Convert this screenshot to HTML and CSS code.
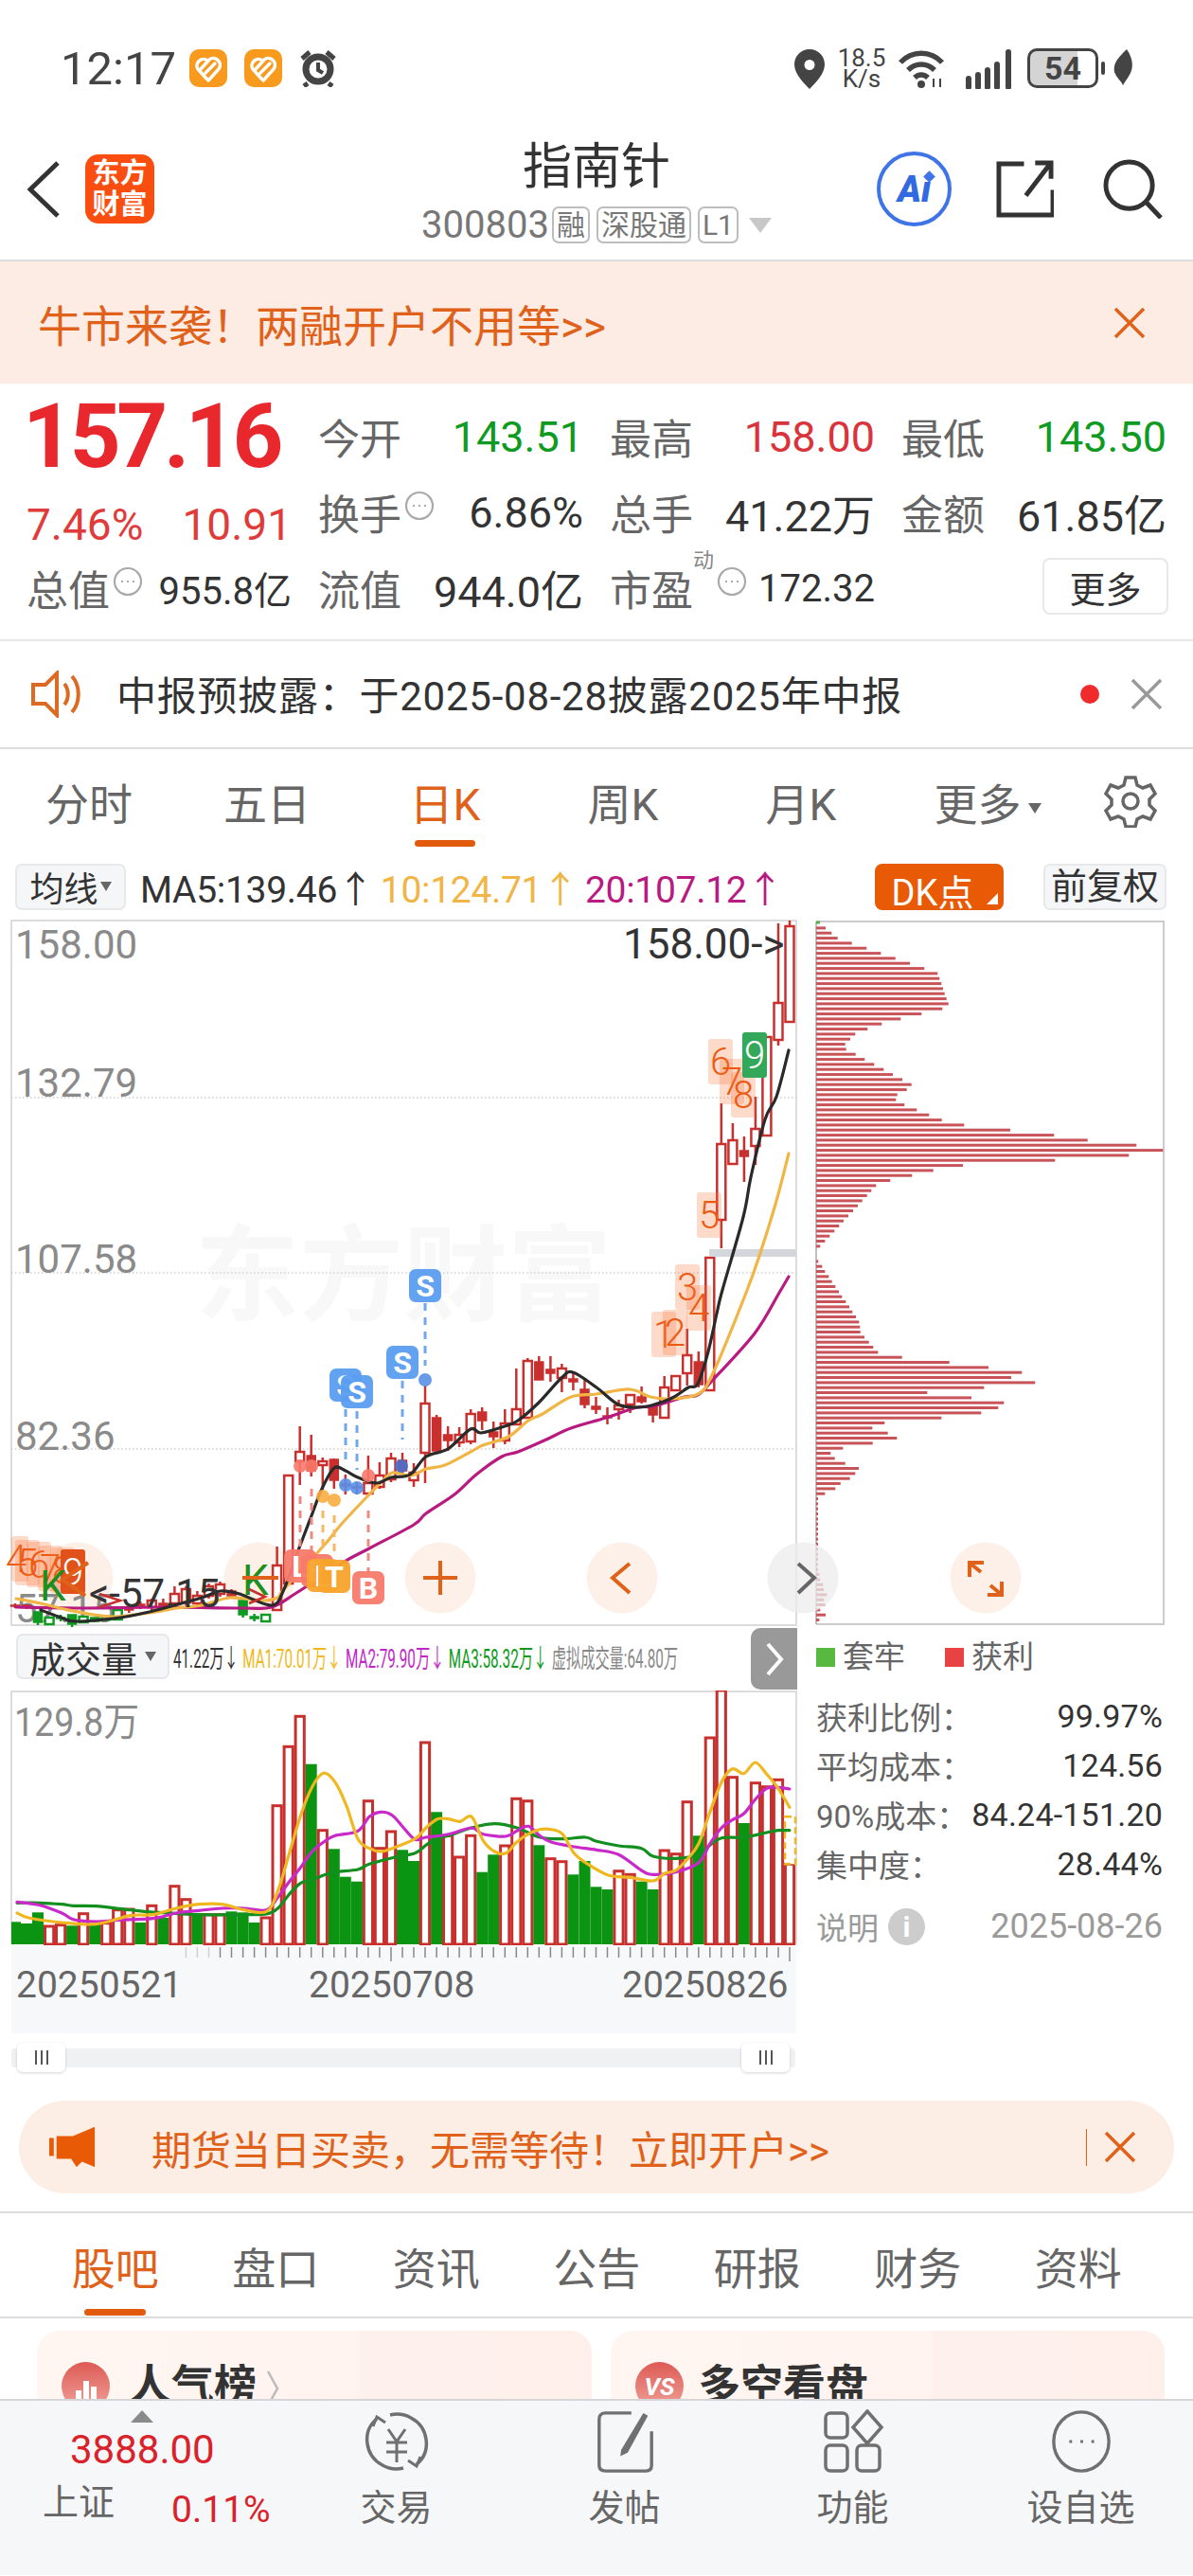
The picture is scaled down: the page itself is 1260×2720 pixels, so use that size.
FILE: index.html
```html
<!DOCTYPE html>
<html lang="zh-CN">
<head>
<meta charset="utf-8">
<title>指南针</title>
<link rel="stylesheet" href="styles.css">
</head>
<body>
<div class="page">

  <header class="status">
    <div class="status-left">
      <span class="clock">12:17</span>
      <svg class="tile" viewBox="0 0 40 40"><rect class="tile-bg" width="40" height="40" rx="10"/><path class="tile-mark" d="M18 31L9 21C5 15 13 7 19 12M20 33l11-12C36 14 27 6 21 11L12 21M17 25l10-10"/></svg>
      <svg class="tile" viewBox="0 0 40 40"><rect class="tile-bg" width="40" height="40" rx="10"/><path class="tile-mark" d="M18 31L9 21C5 15 13 7 19 12M20 33l11-12C36 14 27 6 21 11L12 21M17 25l10-10"/></svg>
      <svg class="tile" viewBox="0 0 40 40"><circle class="alarm-ring" cx="20" cy="21" r="13"/><path class="alarm-hand" d="M20 14v8l5 3"/><path class="alarm-ear" d="M3 10l8-7M37 10l-8-7M9 36l-4 3M31 36l4 3"/></svg>
    </div>
    <div class="status-right">
      <svg class="pin" viewBox="0 0 32 42"><path class="dark-fill" fill-rule="evenodd" d="M16 0c9 0 16 7 16 16 0 10-10 20-16 26C10 36 0 26 0 16 0 7 7 0 16 0zm0 11a5.500 5.500 0 1 0 0 11 5.500 5.500 0 0 0 0-11z"/></svg>
      <div class="speed"><span>18.5</span><span>K/s</span></div>
      <svg class="wifi" viewBox="0 0 50 42"><path class="wifi-arc" d="M3 14c12-13 32-13 44 0M11 22c8-8 20-8 28 0M18 30c4-4 10-4 14 0"/><circle class="dark-fill" cx="25" cy="37" r="4"/><path class="wifi-tick" d="M38 31v9M45 31v9"/></svg>
      <svg class="signal" viewBox="0 0 50 42"><path class="signal-bar" d="M3 31v9M13 27v13M23 22v18M33 16v24M45 3v37"/></svg>
      <div class="battery"><span class="battery-level">54</span></div>
      <svg class="leaf" viewBox="0 0 22 40"><path class="dark-fill" d="M15 0c6 9 8 18 3 27-2 4-5 7-7 11C9 33 4 30 2 24 0 14 8 7 15 0z"/></svg>
    </div>
  </header>

  <nav class="nav">
    <div class="nav-left">
      <svg class="back" viewBox="0 0 34 60"><polyline points="32,2 3,30 32,58"/></svg>
      <div class="logo">东方<br>财富</div>
    </div>
    <div class="nav-title">
      <div class="stock-name">指南针</div>
      <div class="stock-sub">
        <span class="stock-code">300803</span>
        <span class="tag">融</span>
        <span class="tag">深股通</span>
        <span class="tag">L1</span>
        <i class="tri-down"></i>
      </div>
    </div>
    <div class="nav-right">
      <div class="ai-badge"><span>Ai</span><i class="ai-spark"></i></div>
      <svg class="share" viewBox="0 0 62 62"><path d="M30 4H3v55h58V32M32 38L58 4M42 3h17v17"/></svg>
      <svg class="search" viewBox="0 0 64 64"><circle cx="28" cy="28" r="25"/><path d="M46 46l16 17"/></svg>
    </div>
  </nav>

  <section class="promo">
    <span>牛市来袭！两融开户不用等&gt;&gt;</span>
    <svg class="close-x orange" viewBox="0 0 34 34"><path d="M2 2l30 30M32 2L2 32"/></svg>
  </section>

  <section class="quote">
    <div class="quote-price">157.16</div>
    <div class="cell"><span class="lbl">今开</span><span class="val down">143.51</span></div>
    <div class="cell"><span class="lbl">最高</span><span class="val up">158.00</span></div>
    <div class="cell"><span class="lbl">最低</span><span class="val down">143.50</span></div>

    <div class="quote-change"><span>7.46%</span><span>10.91</span></div>
    <div class="cell"><span class="lbl">换手<svg class="hint" viewBox="0 0 32 32"><circle cx="16" cy="16" r="14"/><path d="M9 16h2M15 16h2M21 16h2"/></svg></span><span class="val">6.86%</span></div>
    <div class="cell"><span class="lbl">总手</span><span class="val">41.22万</span></div>
    <div class="cell"><span class="lbl">金额</span><span class="val">61.85亿</span></div>

    <div class="cell"><span class="lbl">总值<svg class="hint" viewBox="0 0 32 32"><circle cx="16" cy="16" r="14"/><path d="M9 16h2M15 16h2M21 16h2"/></svg></span><span class="val small">955.8亿</span></div>
    <div class="cell"><span class="lbl">流值</span><span class="val">944.0亿</span></div>
    <div class="cell"><span class="lbl">市盈<sup class="sup">动</sup><svg class="hint" viewBox="0 0 32 32"><circle cx="16" cy="16" r="14"/><path d="M9 16h2M15 16h2M21 16h2"/></svg></span><span class="val small">172.32</span></div>
    <div class="cell end"><button class="more-btn">更多</button></div>
  </section>

  <section class="notice">
    <svg class="notice-icon" viewBox="0 0 56 50"><path d="M16 15H3v20h13l12 12V3zM36 14c5 6 5 16 0 22M44 6c9 10 9 28 0 38"/></svg>
    <span class="notice-text">中报预披露：于2025-08-28披露2025年中报</span>
    <i class="notice-dot"></i>
    <svg class="close-x grey" viewBox="0 0 34 34"><path d="M2 2l30 30M32 2L2 32"/></svg>
  </section>

  <div class="periods">
    <span class="period">分时</span>
    <span class="period">五日</span>
    <span class="period active">日K</span>
    <span class="period">周K</span>
    <span class="period">月K</span>
    <span class="period shifted">更多<i class="tri-mini"></i></span>
    <svg class="gear" viewBox="0 0 56 56"><path d="M23 3h10l2 8 6 3 8-3 5 9-6 6v6l6 6-5 9-8-3-6 3-2 8H23l-2-8-6-3-8 3-5-9 6-6v-6l-6-6 5-9 8 3 6-3z"/><circle cx="28" cy="28" r="8"/></svg>
  </div>

  <div class="kbar">
    <button class="pick">均线<i class="tri-mini"></i></button>
    <span class="ma ma5">MA5:139.46↑</span>
    <span class="ma ma10">10:124.71↑</span>
    <span class="ma ma20">20:107.12↑</span>
    <span class="kbar-gap"></span>
    <button class="dk">DK点<i class="dk-corner"></i></button>
    <button class="adjust">前复权</button>
  </div>

  <div class="chart-row">
    <svg class="kline" viewBox="0 968 856 750">
      <rect class="frame" x="12" y="972" width="829" height="744"/>
      <text class="watermark" x="206" y="1386">东方财富</text>
      <path class="grid-line" d="M12 1159H841M12 1344H841M12 1530H841"/>
      <circle class="round-key" cx="82" cy="1666" r="37.500"/>
      <circle class="round-key" cx="274" cy="1666" r="37.500"/>
      <circle class="round-key" cx="465" cy="1666" r="37.500"/>
      <circle class="round-key" cx="657" cy="1666" r="37.500"/>
      <circle class="round-key grey-key" cx="848" cy="1666" r="37.500"/>
      <text class="axis-label" x="16" y="1012">158.00</text>
      <text class="axis-label" x="16" y="1158">132.79</text>
      <text class="axis-label" x="16" y="1344">107.58</text>
      <text class="axis-label" x="16" y="1531">82.36</text>
      <text class="axis-label" x="16" y="1713">57.15</text>
      <g id="candles"></g>
      <rect class="limit-band" x="749" y="1319" width="92" height="8"/>
      <g id="ma-lines"></g>
      <text class="peak-label" x="658" y="1012">158.00-&gt;</text>
      <g id="marks"></g>
      <text class="low-label" x="94" y="1697">&lt;-57.15</text>
      <text class="k-letter" x="42" y="1690">K</text>
      <text class="k-letter" x="256" y="1684">K</text>
      <path class="key-stroke" d="M256 1666H294M447 1666H483M465 1648V1684M665 1651L647 1666L665 1682M93 1650L66 1668L90 1685"/>
      <path class="key-stroke grey-stroke" d="M843 1651L860 1666L843 1682"/>
      <path class="low-chevron" d="M105 1683L127 1690L105 1697M263 1678L280 1686L263 1693"/>
    </svg>
    <svg class="profile" viewBox="856 968 404 750">
      <path class="profile-frame" d="M862 973H1229V1715H862"/>
      <path class="profile-axis" d="M862 973V1715"/>
      <g id="profile-bars"></g>
      <circle class="round-key" cx="1041" cy="1666" r="37.500"/>
      <path class="expand" d="M1024 1665V1650H1039M1025 1651L1036 1660M1058 1670V1684H1043M1057 1683L1046 1674"/>
    </svg>
  </div>

  <div class="lower">
    <div class="lower-left">
      <div class="vol-head">
        <button class="pick wide">成交量<i class="tri-mini"></i></button>
        <div class="vol-legend">
          <div class="vol-legend-line">
            <span>41.22万↓</span>
            <span class="c-ma1">MA1:70.01万↓</span>
            <span class="c-ma2">MA2:79.90万↓</span>
            <span class="c-ma3">MA3:58.32万↓</span>
            <span class="c-virtual">虚拟成交量:64.80万</span>
          </div>
        </div>
        <button class="vol-next"><svg viewBox="0 0 20 36"><polyline points="3,2 17,18 3,34"/></svg></button>
      </div>
      <svg class="volume" viewBox="0 1785 856 269">
        <path class="vol-frame" d="M12 2053V1786H841V2053"/>
        <text class="axis-label" x="15" y="1833" textLength="132" lengthAdjust="spacingAndGlyphs">129.8万</text>
        <g id="vol-bars"></g>
        <g id="vol-lines"></g>
      </svg>
      <div class="time-axis">
        <svg id="ticks" class="ticks" viewBox="0 0 829 18"></svg>
        <div class="dates">
          <span>20250521</span>
          <span>20250708</span>
          <span>20250826</span>
        </div>
      </div>
      <div class="slider">
        <span class="grip"><i></i><i></i><i></i></span>
        <span class="grip"><i></i><i></i><i></i></span>
      </div>
    </div>
    <aside class="stats">
      <div class="stats-legend">
        <span><i class="sq sq-green"></i>套牢</span>
        <span><i class="sq sq-red"></i>获利</span>
      </div>
      <dl class="stats-list">
        <div><dt>获利比例：</dt><dd>99.97%</dd></div>
        <div><dt>平均成本：</dt><dd>124.56</dd></div>
        <div><dt>90%成本：</dt><dd>84.24-151.20</dd></div>
        <div><dt>集中度：</dt><dd>28.44%</dd></div>
      </dl>
      <div class="stats-foot">
        <span class="explain">说明<i class="info">i</i></span>
        <span class="stats-date">2025-08-26</span>
      </div>
    </aside>
  </div>

  <section class="pill">
    <svg class="horn" viewBox="0 0 52 44"><path d="M50 0v44l-14-6-6 6-6-9H8V10h18zM0 12h5v20H0z"/></svg>
    <span class="pill-text">期货当日买卖，无需等待！立即开户&gt;&gt;</span>
    <i class="pill-rule"></i>
    <svg class="close-x orange" viewBox="0 0 34 34"><path d="M2 2l30 30M32 2L2 32"/></svg>
  </section>

  <div class="subtabs">
    <span class="subtab active">股吧</span>
    <span class="subtab">盘口</span>
    <span class="subtab">资讯</span>
    <span class="subtab">公告</span>
    <span class="subtab">研报</span>
    <span class="subtab">财务</span>
    <span class="subtab">资料</span>
  </div>

  <div class="cards">
    <article class="card">
      <i class="card-ghost"></i>
      <i class="card-icon"><svg viewBox="0 0 40 40"><path d="M9 38V24h6v14zM17 38V14h6v24zM25 38V20h6v18z"/></svg></i>
      <b class="card-title">人气榜</b>
      <svg class="card-arrow" viewBox="0 0 14 40"><polyline points="2,2 12,20 2,38"/></svg>
    </article>
    <article class="card">
      <i class="card-ghost"></i>
      <i class="card-icon vs">VS</i>
      <b class="card-title">多空看盘</b>
    </article>
  </div>

  <footer class="dock">
    <div class="index">
      <i class="tri-up"></i>
      <div class="index-val">3888.00</div>
      <div class="index-row"><span>上证</span><span class="index-pct">0.11%</span></div>
    </div>
    <div class="dock-item">
      <svg viewBox="0 0 70 66"><path d="M14 9C-2 22 1 48 20 58c7 4 14 5 22 3M56 57C72 44 69 18 50 8c-7-4-14-5-22-3"/><path d="M10 17l4-10 9 6M60 49l-4 10-9-6" class="fine"/><path class="fine" d="M26 20l9 13 9-13M24 34h22M24 44h22M35 33v22"/></svg>
      <span>交易</span>
    </div>
    <div class="dock-item">
      <svg viewBox="0 0 62 70"><path d="M38 4H10Q3 4 3 11v50q0 6 7 6h44q6 0 6-6V24"/><path class="solid" d="M27 44l24-40 5 3-22 40-8 4z"/></svg>
      <span>发帖</span>
    </div>
    <div class="dock-item">
      <svg viewBox="0 0 64 68"><rect x="3" y="4" width="23" height="26" rx="5"/><path d="M47 2l15 17-15 17-15-17z"/><rect x="3" y="38" width="23" height="27" rx="5"/><rect x="36" y="38" width="24" height="27" rx="5"/></svg>
      <span>功能</span>
    </div>
    <div class="dock-item">
      <svg viewBox="0 0 66 70"><ellipse cx="33" cy="35" rx="30" ry="32"/><path class="fine" d="M20 35h3M32 35h3M44 35h3"/></svg>
      <span>设自选</span>
    </div>
  </footer>
</div>
<script src="script.js"></script>
</body>
</html>
```
FILE: styles.css
```css
* { box-sizing: border-box; }
html, body { margin: 0; padding: 0; background: #fff; }
body { font-family: Roboto, "Noto Sans CJK SC", sans-serif; color: #333; }
button { font-family: inherit; padding: 0; cursor: pointer; }
i { font-style: normal; }

.page { width: 1260px; height: 2720px; overflow: hidden; display: flex; flex-direction: column; background: #fff; }

/* system status strip */
.status { height: 125px; flex: none; display: flex; justify-content: space-between; padding: 50px 63px 0 64px; }
.status-left, .status-right { display: flex; align-items: flex-start; }
.clock { font-size: 49px; line-height: 46px; color: #444; width: 136px; }
.tile { width: 40px; height: 40px; margin-right: 18px; margin-top: 2px; }
.tile-bg { fill: #f79a1e; }
.tile-mark { fill: none; stroke: #fff; stroke-width: 3.500; stroke-linecap: round; }
.alarm-ring { fill: none; stroke: #444; stroke-width: 7; }
.alarm-hand { fill: none; stroke: #444; stroke-width: 4; }
.alarm-ear { fill: none; stroke: #444; stroke-width: 5; }
.dark-fill { fill: #444; }
.pin { width: 32px; height: 42px; margin: 2px 9px 0 0; }
.speed { width: 60px; display: flex; flex-direction: column; font-size: 26px; line-height: 22px; color: #444; text-align: center; margin-right: 8px; }
.wifi { width: 50px; height: 42px; margin: 2px 22px 0 0; }
.wifi-arc { fill: none; stroke: #444; stroke-width: 5.500; }
.wifi-tick { fill: none; stroke: #444; stroke-width: 2; }
.signal { width: 50px; height: 42px; margin: 2px 15px 0 0; }
.signal-bar { fill: none; stroke: #444; stroke-width: 6; stroke-linecap: round; }
.battery { position: relative; width: 75px; height: 42px; margin-top: 1px; border: 3px solid #444; border-radius: 10px; background: linear-gradient(90deg, #d4d4d4 72%, #fff 72%); display: flex; align-items: center; justify-content: center; }
.battery::after { content: ""; position: absolute; right: -10px; top: 11px; width: 4px; height: 14px; background: #444; border-radius: 2px; }
.battery-level { font-size: 34px; font-weight: 700; color: #444; line-height: 36px; }
.leaf { width: 22px; height: 40px; margin: 2px 0 0 15px; }

/* stock header */
.nav { height: 151px; flex: none; display: grid; grid-template-columns: 1fr auto 1fr; align-items: center; border-bottom: 2px solid #ddd; }
.nav-left { display: flex; align-items: center; padding-left: 29px; }
.back { width: 34px; height: 60px; fill: none; stroke: #333; stroke-width: 5; margin-right: 27px; }
.logo { width: 73px; height: 73px; background: #f94e0f; border-radius: 14px; color: #fff; font-size: 29px; font-weight: 700; line-height: 33px; text-align: center; padding-top: 4px; }
.nav-title { display: flex; flex-direction: column; align-items: center; margin-top: 4px; }
.stock-name { font-size: 52px; line-height: 62px; color: #333; }
.stock-sub { display: flex; align-items: center; gap: 7px; margin-top: 10px; color: #777; }
.stock-code { font-size: 40px; line-height: 40px; margin-right: -4px; }
.tag { height: 39px; border: 2px solid #bdbdbd; border-radius: 7px; font-size: 30px; line-height: 35px; padding: 0 3px; color: #777; }
.tri-down { width: 0; height: 0; border-left: 12px solid transparent; border-right: 12px solid transparent; border-top: 16px solid #c8c8c8; margin-left: 4px; }
.nav-right { display: flex; align-items: center; justify-content: flex-end; padding-right: 32px; }
.ai-badge { position: relative; width: 79px; height: 79px; border: 4px solid #3f74e6; border-radius: 50%; color: #3169e0; font-size: 38px; font-weight: 900; font-style: italic; display: flex; align-items: center; justify-content: center; margin-right: 47px; }
.ai-spark { position: absolute; right: 15px; top: 18px; width: 9px; height: 9px; background: #3f74e6; transform: rotate(45deg); }
.share { width: 61px; height: 61px; fill: none; stroke: #333; stroke-width: 5; margin-right: 52px; }
.search { width: 63px; height: 63px; fill: none; stroke: #333; stroke-width: 5; }

/* promo strip */
.promo { height: 129px; flex: none; background: #fdece4; display: flex; align-items: center; justify-content: space-between; padding: 0 50px 0 40px; color: #e0611a; font-size: 46px; }
.close-x { width: 34px; height: 34px; fill: none; stroke-width: 3.500; }
.close-x.orange { stroke: #e0611a; }
.close-x.grey { stroke: #999; }

/* quote table */
.quote { height: 272px; flex: none; padding: 16px 0 0 28px; display: grid; grid-template-columns: 280px 280px 280px 280px; grid-template-rows: 80px 80px 80px; column-gap: 28px; border-bottom: 2px solid #e8e8e8; }
.quote-price { font-size: 94px; font-weight: 700; color: #e9282d; letter-spacing: -4.300px; line-height: 80px; margin-left: -4px; }
.quote-change { display: flex; justify-content: space-between; color: #e03b3b; font-size: 46px; line-height: 50px; padding: 28px 0 0 0; }
.cell { display: flex; align-items: center; justify-content: space-between; }
.cell.end { justify-content: flex-end; padding-left: 0; }
.lbl { display: flex; align-items: center; font-size: 44px; color: #666; position: relative; }
.hint { width: 32px; height: 32px; margin: -14px 0 0 3px; fill: none; stroke: #aaa; stroke-width: 2.200; }
.val { font-size: 45px; color: #333; }
.val.small { font-size: 40px; }
.val.up { color: #d9343b; }
.val.down { color: #0f9a22; }
.sup { font-size: 22px; color: #888; line-height: 22px; align-self: flex-start; margin-top: -8px; }
.more-btn { width: 133px; height: 60px; background: #fff; border: 2px solid #e8e8e8; border-radius: 8px; font-size: 38px; color: #333; margin: 0 -2px 4px 0; }

/* announcement row */
.notice { height: 114px; flex: none; display: flex; align-items: center; padding: 0 32px; border-bottom: 2px solid #ddd; }
.notice-icon { width: 56px; height: 50px; fill: none; stroke: #dd6a22; stroke-width: 4; margin-right: 35px; }
.notice-text { font-size: 42px; color: #333; flex: 1; letter-spacing: .75px; margin-top: -4px; }
.notice-dot { width: 20px; height: 20px; background: #ef2b2b; border-radius: 50%; margin-right: 33px; }

/* period switcher */
.periods { height: 105px; flex: none; display: grid; grid-template-columns: repeat(6, 188px) auto; align-items: center; position: relative; }
.period { position: relative; text-align: center; font-size: 46px; color: #666; padding-top: 4px; }
.period.shifted { padding-left: 18px; }
.period.active { color: #e0611a; }
.period.active::after { content: ""; position: absolute; left: 62px; bottom: -15px; width: 64px; height: 7px; border-radius: 4px; background: #e25a0c; }
.tri-mini { display: inline-block; width: 0; height: 0; border-left: 7px solid transparent; border-right: 7px solid transparent; border-top: 11px solid #666; margin-left: 7px; vertical-align: middle; }
.gear { width: 56px; height: 56px; fill: none; stroke: #666; stroke-width: 3.500; margin: 4px 0 0 38px; }

/* indicator toolbar */
.kbar { height: 72px; flex: none; display: flex; align-items: center; padding: 8px 28px 0 16px; }
.pick { height: 49px; background: #f5f6f8; border: 2px solid #e8e8ea; border-radius: 7px; font-size: 36px; color: #333; width: 117px; display: flex; align-items: center; justify-content: center; margin-right: 15px; }
.pick .tri-mini { border-left-width: 6px; border-right-width: 6px; border-top-width: 10px; margin-left: 2px; }
.pick.wide { width: 162px; height: 48px; font-size: 38px; margin: 0 4px 5px 0; flex: none; }
.pick.wide .tri-mini { margin-left: 8px; }
.ma { font-size: 39px; margin-right: 7px; letter-spacing: -.3px; }
.ma5 { color: #333; }
.ma10 { color: #f0b545; }
.ma20 { color: #b81a80; }
.kbar-gap { flex: 1; }
.dk { position: relative; width: 136px; height: 49px; background: #e85a05; border: 0; border-radius: 8px; color: #fff; font-size: 38px; padding-right: 14px; margin-right: 42px; }
.dk-corner { position: absolute; right: 6px; bottom: 6px; width: 0; height: 0; border-left: 12px solid transparent; border-bottom: 12px solid #fff; }
.adjust { width: 130px; height: 49px; background: #f5f6f8; border: 2px solid #e8e8ea; border-radius: 7px; font-size: 38px; line-height: 44px; color: #333; }

/* main chart canvas */
.chart-row { height: 750px; flex: none; display: flex; }
.kline { width: 856px; height: 750px; overflow: visible; position: relative; z-index: 1; flex: none; }
.profile { width: 404px; height: 750px; flex: none; }
.kline text, .profile text, .volume text { font-family: Roboto, "Noto Sans CJK SC", sans-serif; }
.frame { fill: none; stroke: #dcdcdc; stroke-width: 2; }
.watermark { font-size: 110px; font-weight: 700; fill: #f8f8f8; }
.grid-line { fill: none; stroke: #cfcfcf; stroke-width: 1.500; stroke-dasharray: 1.500 2.500; }
.round-key { fill: #fdeee5; opacity: .9; }
.grey-key { fill: #ececec; opacity: .75; }
.axis-label { font-size: 42px; fill: #8a8a8a; }
.peak-label { font-size: 44px; fill: #333; }
.low-label { font-size: 42px; fill: #333; }
.k-letter { font-size: 44px; fill: #1d8f1d; }
.key-stroke { fill: none; stroke: #e0611a; stroke-width: 4; }
.grey-stroke { stroke: #666; }
.low-chevron { fill: none; stroke: #c8302e; stroke-width: 2.500; }
.limit-band { fill: #d3d6da; }
.candle-wick { stroke: #c8302e; stroke-width: 2.500; }
.candle-hollow { fill: #fff; stroke: #c8302e; stroke-width: 2.500; }
.candle-solid { fill: #c8302e; stroke: #c8302e; stroke-width: 1.500; }
.candle-wick.green { stroke: #0f9a22; }
.candle-hollow.green { stroke: #0f9a22; }
.candle-solid.green { fill: #0f9a22; stroke: #0f9a22; }
.line { fill: none; stroke-width: 3.200; stroke-linejoin: round; stroke-linecap: round; }
.line-black { stroke: #2a2a2a; }
.line-amber { stroke: #f0b545; }
.line-plum { stroke: #b81a80; }
.tag-rect { fill: #fc783c; opacity: .27; }
.tag-num { font-size: 40px; font-weight: 300; fill: #ec5a12; text-anchor: middle; }
.tag-box-green { fill: #34a85a; }
.tag-box-dark { fill: #e0521a; }
.tag-num-light { font-size: 40px; font-weight: 300; fill: #fff; text-anchor: middle; }
.sig-blue { fill: #5b9df0; opacity: .95; }
.sig-red { fill: #f77a6a; opacity: .95; }
.sig-orange { fill: #f8a32c; opacity: .95; }
.sig-letter { font-size: 32px; font-weight: 700; fill: #fff; text-anchor: middle; }
.sig-dash { stroke-width: 3; stroke-dasharray: 8 7; fill: none; }
.dash-blue { stroke: #6ea8ee; }
.dash-red { stroke: #ef8a80; }
.dash-orange { stroke: #f6b860; }
.dot-blue { fill: #5a8fe8; opacity: .9; }
.dot-navy { fill: #4a6fd0; opacity: .9; }
.dot-red { fill: #f77a6a; opacity: .9; }
.dot-orange { fill: #f8ad40; opacity: .9; }

/* chip distribution */
.profile-frame { fill: none; stroke: #ccc; stroke-width: 2; }
.profile-axis { fill: none; stroke: #aaa; stroke-width: 1.500; }
.chip { fill: #c8545a; }
.chip-top { fill: #58b04a; }
.expand { fill: none; stroke: #e0611a; stroke-width: 4; }

/* volume section */
.lower { height: 487px; flex: none; display: grid; grid-template-columns: 856px 1fr; }
.vol-head { height: 67px; display: flex; align-items: center; padding: 0 14px 0 17px; position: relative; z-index: 2; }
.vol-legend { flex: 1; min-width: 0; height: 30px; }
.vol-legend-line { display: flex; gap: 8px; white-space: nowrap; font-size: 27px; line-height: 30px; transform: scaleX(.564); transform-origin: left center; }
.c-ma1 { color: #f0b820; }
.c-ma2 { color: #c026c8; }
.c-ma3 { color: #109a1c; }
.c-virtual { color: #888; }
.vol-next { width: 49px; height: 65px; background: #999; border: 0; border-radius: 10px 0 0 10px; display: flex; align-items: center; justify-content: center; flex: none; }
.vol-next svg { width: 20px; height: 36px; fill: none; stroke: #fff; stroke-width: 4; }
.volume { width: 856px; height: 269px; display: block; }
.vol-frame { fill: none; stroke: #dcdcdc; stroke-width: 2; }
.bar-red { fill: #fff; stroke: #c8302e; stroke-width: 3; }
.bar-green { fill: #0a9412; }
.bar-virtual { fill: #fff; stroke: #f0b820; stroke-width: 2.500; stroke-dasharray: 7 4; }
.vol-ma1 { stroke: #f0b820; }
.vol-ma2 { stroke: #c929c9; }
.vol-ma3 { stroke: #128f1e; }
.time-axis { margin-left: 12px; width: 829px; height: 93px; background: #f7f8fa; }
.ticks { display: block; width: 829px; height: 18px; }
.tick { stroke: #888; stroke-width: 1.500; }
.dates { display: grid; grid-template-columns: 309px 331px auto; padding-left: 5px; font-size: 39px; line-height: 44px; color: #666; margin-top: 2px; }
.slider { margin: 10px 0 0 12px; width: 828px; height: 31px; display: flex; justify-content: space-between; padding: 0 6px; background: linear-gradient(#f0f1f3, #f0f1f3) center / 100% 20px no-repeat; border-radius: 10px; }
.grip { width: 51px; height: 31px; background: #fff; border-radius: 6px; box-shadow: 0 1px 3px rgba(0,0,0,.18); display: flex; align-items: center; justify-content: center; gap: 4px; }
.grip i { width: 2px; height: 15px; background: #555; }

/* chip statistics */
.stats { padding: 12px 32px 0 6px; font-size: 33px; color: #666; }
.stats-legend { display: flex; gap: 42px; line-height: 40px; }
.stats-legend span { display: flex; align-items: center; gap: 8px; }
.sq { width: 20px; height: 20px; }
.sq-green { background: #58b840; }
.sq-red { background: #e84242; }
.stats-list { margin: 16px 0 0; }
.stats-list div { display: flex; justify-content: space-between; height: 52px; align-items: center; }
.stats-list dt { margin: 0; }
.stats-list dd { margin: 0; color: #333; font-size: 34px; letter-spacing: .2px; }
.stats-foot { display: flex; justify-content: space-between; align-items: center; margin-top: 16px; color: #9a9a9a; font-size: 36px; }
.explain { display: flex; align-items: center; gap: 10px; font-size: 33px; }
.info { width: 39px; height: 39px; border-radius: 50%; background: #ccc; color: #fff; font-size: 30px; font-weight: 700; display: flex; align-items: center; justify-content: center; }

/* futures pill */
.pill { margin: 13px 20px 0; height: 98px; flex: none; border-radius: 49px; background: #fdeee5; display: flex; align-items: center; padding: 0 40px 0 32px; color: #e0611a; font-size: 42px; }
.horn { width: 50px; height: 44px; fill: #e85a05; margin-right: 58px; }
.pill-text { flex: 1; }
.pill-rule { width: 1.500px; height: 39px; background: #e0611a; margin-right: 18px; }

/* content tabs */
.subtabs { margin-top: 19px; height: 113px; flex: none; border-top: 2px solid #ddd; border-bottom: 2px solid #ddd; display: grid; grid-template-columns: repeat(7, 169.500px); padding-left: 37px; align-items: center; }
.subtab { position: relative; text-align: center; font-size: 46px; color: #666; }
.subtab.active { color: #e0611a; }
.subtab.active::after { content: ""; position: absolute; left: 52px; bottom: -20px; width: 65px; height: 7px; border-radius: 4px; background: #e25a0c; }

/* feature cards, clipped by the dock */
.cards { height: 85px; flex: none; overflow: hidden; display: grid; grid-template-columns: 586px 585px; column-gap: 20px; padding: 13px 0 0 39px; }
.card { position: relative; height: 150px; border-radius: 24px; background: linear-gradient(90deg, #fff6f2, #fff1ec); display: flex; align-items: flex-start; padding: 33px 0 0 26px; overflow: hidden; }
.card-ghost { position: absolute; right: 0; top: 0; width: 245px; height: 150px; background: #fdeee9; opacity: .5; }
.card-icon { position: relative; width: 51px; height: 51px; border-radius: 50%; background: linear-gradient(#de5a55, #efa39b); color: #fff; font-size: 26px; font-weight: 700; font-style: italic; display: flex; align-items: center; justify-content: center; margin-right: 20px; }
.card-icon.vs { margin-right: 15px; }
.card-icon svg { width: 40px; height: 40px; fill: #fff; }
.card-title { position: relative; font-size: 45px; line-height: 60px; font-weight: 700; color: #333; margin-top: -4px; }
.card-arrow { position: relative; width: 14px; height: 40px; fill: none; stroke: #bbb; stroke-width: 2.500; margin: 8px 0 0 10px; }

/* bottom dock */
.dock { height: 186px; flex: none; background: #f6f7f9; border-top: 2px solid #d6d6da; display: grid; grid-template-columns: 298px repeat(4, 241px); }
.index { position: relative; padding-left: 45px; }
.tri-up { position: absolute; left: 138px; top: 10px; width: 0; height: 0; border-left: 12px solid transparent; border-right: 12px solid transparent; border-bottom: 13px solid #8a8a8a; }
.index-val { margin: 29px 0 0 29px; font-size: 42px; line-height: 46px; color: #d9222a; }
.index-row { display: flex; gap: 60px; margin-top: 9px; align-items: flex-start; font-size: 38px; color: #666; line-height: 46px; }
.index-pct { color: #d9222a; font-size: 39px; margin-top: 8px; }
.dock-item { display: flex; flex-direction: column; align-items: center; padding-top: 9px; font-size: 38px; color: #666; }
.dock-item svg { height: 68px; width: 70px; fill: none; stroke: #707070; stroke-width: 3.500; }
.dock-item svg .fine { stroke-width: 3; }
.dock-item svg .solid { fill: #707070; stroke: none; }
.dock-item span { margin-top: 13px; line-height: 46px; }
```
FILE: script.js
```js
// Draws the candle, volume and chip series into the chart canvases.
const SVG_GROUP = (id, html) => { document.getElementById(id).innerHTML = html; };

const smooth = (pts) => {
  let d = `M${pts[0][0]} ${pts[0][1]}`;
  for (let i = 0; i < pts.length - 1; i++) {
    const p0 = pts[Math.max(i - 1, 0)], p1 = pts[i], p2 = pts[i + 1], p3 = pts[Math.min(i + 2, pts.length - 1)];
    const c1x = p1[0] + (p2[0] - p0[0]) / 6, c1y = p1[1] + (p2[1] - p0[1]) / 6;
    const c2x = p2[0] - (p3[0] - p1[0]) / 6, c2y = p2[1] - (p3[1] - p1[1]) / 6;
    d += `C${c1x.toFixed(1)} ${c1y.toFixed(1)} ${c2x.toFixed(1)} ${c2y.toFixed(1)} ${p2[0]} ${p2[1]}`;
  }
  return d;
};

// Daily candles, oldest first: wick top, body top, body bottom, wick bottom, style.
// h = hollow red, s = solid red, g = solid green, o = hollow green.
const candles = [
  [1693,1695,1696,1698,'s'],[1694,1695,1697,1699,'s'],[1702,1702,1713,1716,'g'],[1708,1708,1715,1715,'o'],
  [1705,1708,1709,1712,'g'],[1705,1705,1715,1718,'g'],[1707,1707,1713,1713,'o'],[1708,1708,1712,1713,'g'],
  [1706,1707,1710,1712,'o'],[1700,1700,1710,1710,'o'],[1696,1698,1700,1703,'s'],[1691,1694,1697,1699,'s'],
  [1688,1690,1697,1700,'h'],[1688,1693,1696,1700,'s'],[1675,1683,1693,1696,'h'],[1675,1678,1692,1695,'h'],
  [1680,1685,1693,1695,'h'],[1672,1675,1685,1688,'h'],[1670,1673,1683,1686,'h'],[1678,1680,1685,1688,'s'],
  [1690,1690,1705,1708,'g'],[1704,1707,1709,1712,'g'],[1705,1705,1712,1712,'o'],[1633,1653,1700,1700,'h'],
  [1557,1558,1672,1672,'h'],[1506,1533,1543,1568,'h'],[1515,1537,1553,1559,'s'],[1539,1543,1547,1573,'h'],
  [1540,1541,1563,1572,'s'],[1557,1567,1569,1578,'s'],[1565,1570,1571,1578,'s'],[1537,1566,1577,1580,'h'],
  [1544,1558,1570,1572,'h'],[1534,1540,1562,1565,'h'],[1534,1542,1553,1557,'s'],[1545,1555,1563,1570,'h'],
  [1463,1482,1534,1566,'h'],[1494,1497,1532,1532,'s'],[1506,1515,1521,1532,'s'],[1507,1515,1523,1528,'h'],
  [1488,1493,1522,1525,'h'],[1486,1491,1500,1510,'s'],[1501,1512,1517,1529,'s'],[1488,1503,1521,1525,'h'],
  [1445,1488,1504,1504,'h'],[1434,1437,1497,1497,'h'],[1432,1438,1457,1457,'s'],[1432,1446,1450,1459,'s'],
  [1440,1445,1455,1470,'h'],[1448,1456,1459,1468,'s'],[1455,1467,1483,1487,'s'],[1475,1485,1488,1493,'s'],
  [1486,1495,1497,1504,'s'],[1478,1484,1488,1499,'h'],[1473,1473,1483,1492,'h'],[1464,1475,1480,1482,'s'],
  [1485,1485,1494,1502,'s'],[1453,1465,1497,1497,'h'],[1453,1453,1468,1468,'h'],[1403,1431,1450,1463,'h'],
  [1427,1438,1462,1465,'s'],[1328,1328,1468,1468,'h'],[1165,1208,1288,1318,'h'],[1186,1204,1229,1230,'h'],
  [1200,1215,1221,1248,'s'],[1158,1192,1210,1230,'h'],[1095,1095,1199,1199,'h'],[975,1059,1098,1104,'h'],
  [972,978,1079,1079,'h'],
];

const candleX = (i) => 834 - (68 - i) * 12.03;
SVG_GROUP('candles', candles.map((c, i) => {
  const x = candleX(i).toFixed(1);
  const hue = c[4] === 'g' || c[4] === 'o' ? ' green' : '';
  const hollow = c[4] === 'h' || c[4] === 'o';
  const h = Math.max(c[2] - c[1], 1);
  return `<path class="candle-wick${hue}" d="M${x} ${c[0]}V${c[3]}"/>` +
    `<rect class="${hollow ? 'candle-hollow' : 'candle-solid'}${hue}" x="${(candleX(i) - 4.5).toFixed(1)}" y="${c[1]}" width="9" height="${h}"/>`;
}).join(''));

const maBlack = [[43,1700],[62,1707],[80,1712],[127,1708],[153,1703],[177,1697],[213,1687],[233,1680],[253,1683],[287,1695],[300,1678],[315,1637],[328,1603],[340,1572],[353,1550],[365,1553],[378,1560],[398,1566],[413,1560],[433,1557],[450,1538],[473,1530],[497,1509],[508,1513],[533,1506],[547,1500],[568,1482],[593,1455],[605,1449],[630,1465],[653,1483],[673,1486],[688,1484],[710,1476],[727,1465],[737,1461],[748,1427],[757,1387],[763,1362],[785,1285],[793,1243],[808,1182],[820,1158],[833,1109]];
const maAmber = [[17,1688],[43,1693],[77,1701],[117,1707],[157,1703],[187,1698],[213,1695],[243,1687],[277,1690],[293,1687],[300,1678],[342,1632],[360,1610],[388,1580],[410,1558],[417,1555],[435,1558],[450,1551],[470,1547],[497,1533],[510,1526],[537,1517],[558,1500],[573,1493],[603,1475],[630,1472],[665,1467],[687,1475],[707,1477],[737,1472],[753,1450],[788,1365],[803,1323],[820,1268],[833,1218]];
const maPlum = [[17,1697],[83,1698],[167,1697],[257,1698],[287,1697],[313,1682],[362,1650],[390,1635],[437,1610],[450,1598],[480,1578],[503,1557],[530,1538],[547,1533],[577,1520],[603,1508],[640,1497],[673,1486],[690,1485],[723,1475],[737,1473],[753,1457],[797,1408],[823,1365],[833,1348]];
SVG_GROUP('ma-lines',
  `<path class="line line-plum" d="${smooth(maPlum)}"/><path class="line line-amber" d="${smooth(maAmber)}"/><path class="line line-black" d="${smooth(maBlack)}"/>`);

// Number ladder tags: digit, left, top.
const ladder = [['6',748,1097],['7',760,1118],['8',772,1132],['5',736,1259],['3',713,1335],['4',725,1357],['1',688,1385],['2',700,1383],
  ['4',4,1622],['5',16,1626],['6',28,1628],['7',40,1632],['8',53,1634]];
const tagHtml = ladder.map(([n, x, y]) =>
  `<rect class="tag-rect" x="${Math.max(x, 12)}" y="${y}" width="${x < 12 ? 18 : 26}" height="48" rx="3"/><text class="tag-num" x="${x + 13}" y="${y + 38}">${n}</text>`).join('');
const tagSolid = `<rect class="tag-box-green" x="784" y="1090" width="26" height="48" rx="3"/><text class="tag-num-light" x="797" y="1128">9</text>` +
  `<rect class="tag-box-dark" x="64" y="1636" width="26" height="47" rx="3"/><text class="tag-num-light" x="77" y="1674">9</text>`;

const dashes = [['blue',365,1488,1546],['blue',377,1490,1552],['blue',425,1458,1520],['blue',449,1376,1442],
  ['red',317,1580,1640],['red',329,1572,1640],['red',389,1595,1660],['orange',341,1595,1640],['orange',353,1600,1640]];
const dashHtml = dashes.map(([c, x, a, b]) => `<path class="sig-dash dash-${c}" d="M${x} ${a}V${b}"/>`).join('');

const dots = [['blue',365,1568],['blue',377,1571],['navy',424,1548],['blue',449,1457],['red',317,1548],['red',329,1548],['red',389,1558],['orange',341,1580],['orange',353,1584]];
const dotHtml = dots.map(([c, x, y]) => `<circle class="dot-${c}" cx="${x}" cy="${y}" r="7"/>`).join('');

const sigs = [['blue','S',348,1445],['blue','S',360,1452],['blue','S',408,1421],['blue','S',432,1340],
  ['red','L',300,1636],['red','B',318,1641],['orange','L',324,1646],['orange','T',336,1647],['red','B',372,1659]];
const sigHtml = sigs.map(([c, t, x, y]) =>
  `<rect class="sig-${c}" x="${x}" y="${y}" width="34" height="35" rx="7"/><text class="sig-letter" x="${x + 17}" y="${y + 29}">${t}</text>`).join('');

SVG_GROUP('marks', dashHtml + dotHtml + tagHtml + tagSolid + sigHtml);

// Volume series: bar height is measured from the plot floor.
const VOL_X = 0.5486, VOL_FLOOR = 2053;
const volY = (v) => 1700 + v / 3;
const volBars = 'G988 G993 G958 R1002 R998 G1000 R962 G995 R992 R950 R948 G990 R937 G975 R875 R917 G960 R965 R965 G955 G958 G990 R975 R620 R433 R337 G488 R698 G757 G845 G860 R605 R755 R702 G760 G795 R420 G640 R715 R783 R715 G830 G775 R747 R598 R605 G745 R788 R797 G838 G795 G877 G885 R827 R838 G860 G885 R762 R773 R608 G715 R405 R255 R530 G675 R548 R560 R538 R805'.split(' ');
SVG_GROUP('vol-bars', volBars.map((b, i) => {
  const cx = candleX(i), top = volY(+b.slice(1));
  if (b[0] === 'G') {
    const left = Math.max(cx - 6, 12);
    return `<rect class="bar-green" x="${left.toFixed(1)}" y="${top.toFixed(1)}" width="${(cx + 6 - left).toFixed(1)}" height="${(VOL_FLOOR - top).toFixed(1)}"/>`;
  }
  return `<rect class="bar-red" x="${(cx - 4.6).toFixed(1)}" y="${top.toFixed(1)}" width="9.2" height="${(VOL_FLOOR - top).toFixed(1)}"/>`;
}).join('') + `<rect class="bar-virtual" x="829" y="${volY(655).toFixed(1)}" width="11" height="${((805 - 655) / 3).toFixed(1)}"/>`);

const volMa1 = [[33,960],[55,975],[119,990],[185,995],[251,968],[295,965],[339,945],[383,932],[427,932],[470,950],[513,955],[535,890],[557,770],[579,650],[601,560],[623,517],[645,545],[667,620],[689,725],[711,755],[733,765],[755,755],[799,725],[820,690],[842,662],[864,662],[886,670],[908,655],[930,730],[952,765],[974,770],[995,735],[1017,710],[1039,695],[1061,695],[1083,710],[1105,770],[1127,800],[1171,840],[1213,847],[1257,858],[1279,835],[1301,825],[1323,790],[1345,740],[1367,640],[1389,545],[1410,503],[1432,518],[1454,483],[1476,520],[1498,565],[1520,625]];
const volMa2 = [[33,925],[77,935],[119,960],[141,980],[185,987],[229,982],[295,977],[339,960],[383,952],[427,945],[470,945],[513,950],[535,910],[557,860],[579,815],[601,765],[623,735],[645,715],[689,700],[711,655],[733,640],[755,650],[777,690],[799,727],[820,720],[864,710],[908,690],[930,710],[974,717],[995,700],[1017,685],[1039,715],[1061,735],[1105,750],[1149,760],[1191,775],[1235,825],[1257,838],[1301,830],[1345,800],[1367,740],[1389,690],[1410,665],[1432,645],[1454,600],[1476,565],[1498,562],[1520,567]];
const volMa3 = [[33,928],[77,928],[119,932],[141,937],[185,938],[251,950],[295,957],[383,965],[470,965],[513,963],[535,945],[557,900],[579,865],[601,855],[623,840],[645,830],[689,822],[711,805],[755,785],[799,770],[820,745],[842,722],[864,715],[908,690],[952,677],[995,690],[1039,720],[1083,725],[1127,720],[1149,733],[1191,747],[1235,755],[1257,780],[1301,787],[1345,775],[1367,745],[1389,722],[1432,720],[1476,705],[1498,698],[1520,698]];
const toVol = (pts) => pts.map(([x, y]) => [+(x * VOL_X).toFixed(1), +volY(y).toFixed(1)]);
SVG_GROUP('vol-lines', [[volMa3, 'vol-ma3'], [volMa2, 'vol-ma2'], [volMa1, 'vol-ma1']]
  .map(([p, c]) => `<path class="line ${c}" d="${smooth(toVol(p))}"/>`).join(''));

// Time axis ticks, fading out on the older side.
let tickHtml = '';
for (let i = 0; i < 54; i++) {
  const x = 822 - i * 12.03;
  const major = i === 0 || i === 35;
  const op = i > 50 ? 0.35 : 1;
  tickHtml += `<path class="tick" opacity="${op}" d="M${x.toFixed(1)} 2V${major ? 17 : 13}"/>`;
}
SVG_GROUP('ticks', tickHtml);

// Chip distribution rows from the top price level downward.
const chipEnds = [95,114,133,178,225,270,316,362,408,450,456,462,467,472,478,484,465,399,333,273,228,189,173,157,160,190,219,249,279,308,338,367,352,322,318,345,384,423,463,534,680,819,925,1080,1164,1056,822,530,436,369,300,255,240,226,211,197,182,167,152,138,123,108,93,78,65,65,72,84,93,105,115,126,137,147,159,170,180,191,201,204,205,218,232,246,261,337,487,611,717,683,759,597,417,557,660,642,588,462,282,243,292,321,244,150,111,124,157,200,189,172,142,126,93,71,71,71,71,71,71,71,71,71,71,71,71,71,71,71,75,78,87,89,99,90,93,78,95,75];
let chipHtml = '<rect class="chip-top" x="862" y="972.500" width="4" height="3"/>';
chipEnds.forEach((e, i) => {
  const w = (e - 65) / 3;
  if (w > 0) chipHtml += `<rect class="chip" x="862" y="${(978.4 + i * 5.333).toFixed(1)}" width="${w.toFixed(1)}" height="3"/>`;
});
SVG_GROUP('profile-bars', chipHtml);
```
